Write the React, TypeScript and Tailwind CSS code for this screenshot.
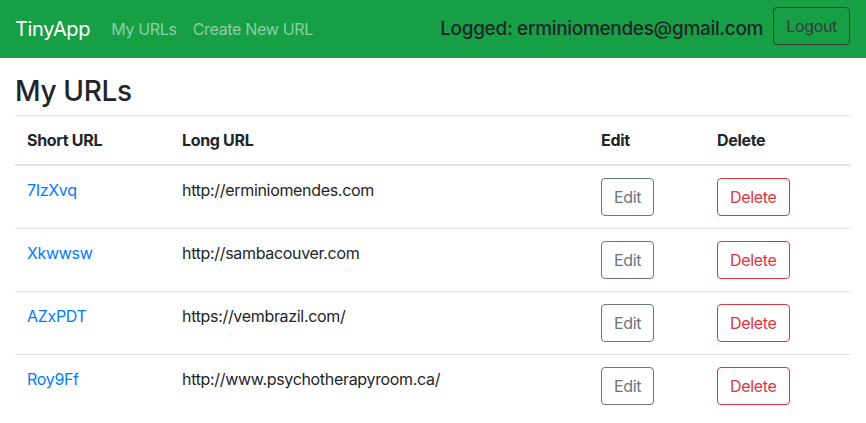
const urls = [
  { id: "7IzXvq", long: "http://erminiomendes.com" },
  { id: "Xkwwsw", long: "http://sambacouver.com" },
  { id: "AZxPDT", long: "https://vembrazil.com/" },
  { id: "Roy9Ff", long: "http://www.psychotherapyroom.ca/" },
];

export default function App() {
  return (
    <div className="min-h-screen bg-white font-['Inter',sans-serif] tracking-[-0.02em] text-[#212529]">
      {/* Navbar */}
      <nav className="flex h-[58px] items-center bg-[#179f46] pl-[15px] pr-4">
        <span className="mr-[21px] text-[20px] leading-[30px] text-white">TinyApp</span>
        <div className="flex gap-4 text-[16px] text-white/50">
          <a href="#">My URLs</a>
          <a href="#">Create New URL</a>
        </div>
        <div className="ml-auto flex items-center">
          <h5 className="mr-[10px] text-[19px] font-medium">Logged: erminiomendes@gmail.com</h5>
          <button className="mb-[7px] h-[38px] rounded-[4px] border border-[#343a40] px-3 text-[16px] text-[#343a40]">
            Logout
          </button>
        </div>
      </nav>

      {/* Content */}
      <main className="px-[15px] pt-[17px]">
        <h3 className="mb-[6px] text-[28px] font-medium leading-[1.2]">My URLs</h3>
        <table className="w-full border-collapse text-left text-[16px]">
          <thead>
            <tr className="border-t border-[#dee2e6]">
              <th className="w-[155px] border-b-2 border-[#dee2e6] p-3 font-bold">Short URL</th>
              <th className="border-b-2 border-[#dee2e6] p-3 font-bold">Long URL</th>
              <th className="w-[116px] border-b-2 border-[#dee2e6] p-3 font-bold">Edit</th>
              <th className="w-[146px] border-b-2 border-[#dee2e6] p-3 font-bold">Delete</th>
            </tr>
          </thead>
          <tbody>
            {urls.map((u) => (
              <tr key={u.id} className="border-t border-[#dee2e6] first:border-t-0">
                <td className="p-3 align-top leading-6">
                  <a href="#" className="text-[#007bff]">{u.id}</a>
                </td>
                <td className="p-3 align-top leading-6">{u.long}</td>
                <td className="p-3 align-top">
                  <button className="h-[38px] rounded-[4px] border border-[#6c757d] px-3 text-[#6c757d]">Edit</button>
                </td>
                <td className="p-3 align-top">
                  <button className="h-[38px] rounded-[4px] border border-[#dc3545] px-3 text-[#dc3545]">Delete</button>
                </td>
              </tr>
            ))}
          </tbody>
        </table>
      </main>
    </div>
  );
}
